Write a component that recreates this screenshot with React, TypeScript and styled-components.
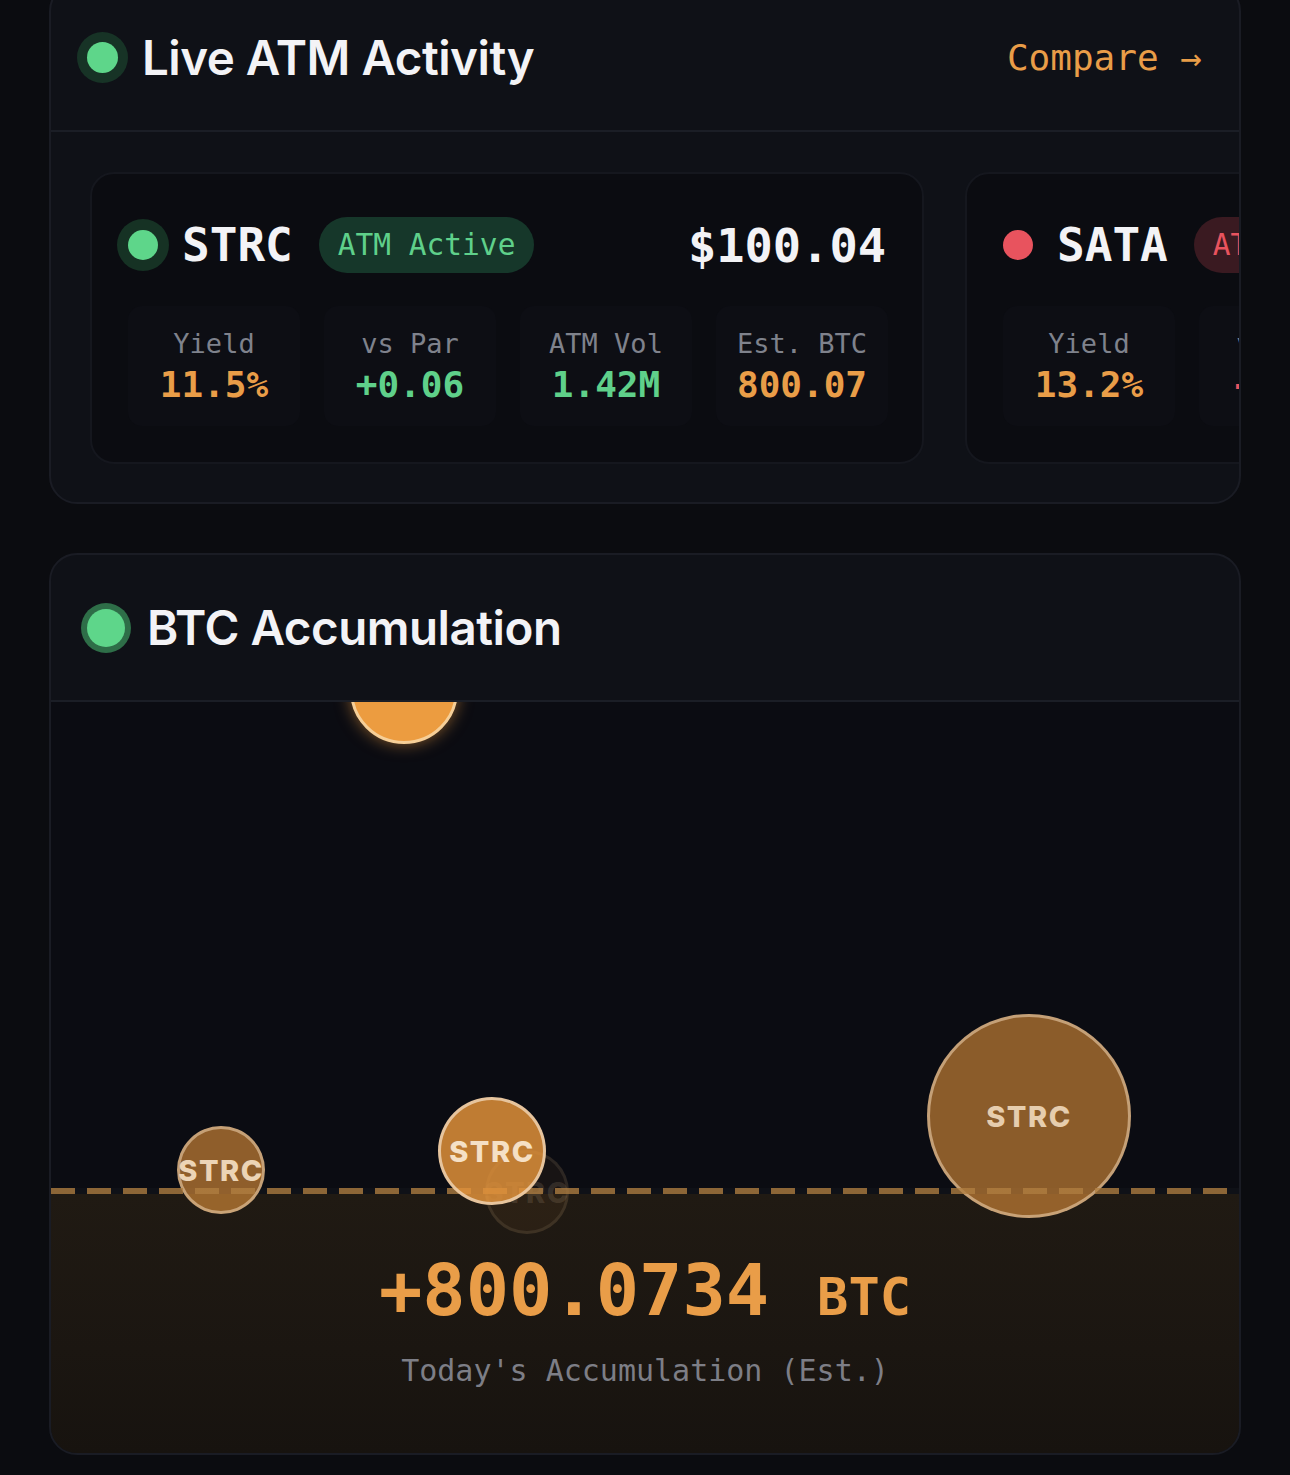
import React from "react";
import styled, { createGlobalStyle } from "styled-components";

const Global = createGlobalStyle`
  html, body { margin: 0; padding: 0; background: #0b0c10; }
  body { font-family: "Inter", "Liberation Sans", sans-serif; overflow: hidden; }
  * { box-sizing: border-box; }
`;

const MONO = `"DejaVu Sans Mono", "Liberation Mono", monospace`;
const ORANGE = "#e99d48";
const GREEN = "#5fd08a";
const RED = "#e8535e";

const Page = styled.div`
  width: 1290px;
  height: 1475px;
  padding: 0 49px;
  display: flex;
  flex-direction: column;
  gap: 49px;
  background: #0b0c10;
`;

const Panel = styled.section<{ $first?: boolean }>`
  width: 1192px;
  margin-top: ${(p) => (p.$first ? "-17px" : "0")};
  background: #0f1117;
  border: 2px solid #1a1c24;
  border-radius: 28px;
  overflow: hidden;
  display: flex;
  flex-direction: column;
`;

const PanelHeader = styled.header`
  height: 147px;
  flex-shrink: 0;
  display: flex;
  align-items: center;
  justify-content: space-between;
  padding: 0 37px 0 36px;
  border-bottom: 2px solid #1b1e26;
`;

const TitleGroup = styled.div<{ $gap: number }>`
  display: flex;
  align-items: center;
  gap: ${(p) => p.$gap}px;
`;

const Dot = styled.span<{ $color: string; $ring: string; $ringSize: number; $size: number }>`
  width: ${(p) => p.$size}px;
  height: ${(p) => p.$size}px;
  border-radius: 50%;
  background: ${(p) => p.$color};
  box-shadow: 0 0 0 ${(p) => p.$ringSize}px ${(p) => p.$ring};
  flex-shrink: 0;
`;

const Title = styled.h2`
  margin: 0;
  color: #f3f3f6;
  font-family: "Inter", "Liberation Sans", sans-serif;
  font-weight: 600;
  font-size: 47.5px;
  letter-spacing: -0.5px;
  line-height: 1;
`;

const CompareLink = styled.a`
  font-family: ${MONO};
  font-size: 36px;
  color: ${ORANGE};
  text-decoration: none;
`;

const Track = styled.div`
  display: flex;
  gap: 41px;
  padding: 40px 0 38px 39px;
`;

const TickerCard = styled.article`
  width: 834px;
  height: 292px;
  flex-shrink: 0;
  background: #0b0c11;
  border: 2px solid #15171e;
  border-radius: 24px;
  padding: 43px 36px 0 36px;
  display: flex;
  flex-direction: column;
  gap: 33px;
`;

const CardHead = styled.div`
  height: 56px;
  display: flex;
  align-items: center;
`;

const Ticker = styled.span`
  font-family: ${MONO};
  font-weight: 700;
  font-size: 46px;
  color: #f3f3f6;
  margin-left: 24px;
  line-height: 1;
`;

const Badge = styled.span<{ $tone: "green" | "red" }>`
  margin-left: 26px;
  height: 56px;
  padding: 0 19px;
  border-radius: 28px;
  display: inline-flex;
  align-items: center;
  font-family: ${MONO};
  font-size: 29.5px;
  white-space: nowrap;
  background: ${(p) => (p.$tone === "green" ? "#16372a" : "#3a1a21")};
  color: ${(p) => (p.$tone === "green" ? GREEN : RED)};
`;

const Price = styled.span`
  margin-left: auto;
  font-family: ${MONO};
  font-weight: 700;
  font-size: 47px;
  color: #f3f3f6;
  line-height: 1;
`;

const Stats = styled.div`
  display: grid;
  grid-template-columns: repeat(4, 172px);
  gap: 24px;
`;

const StatBox = styled.div`
  height: 120px;
  border-radius: 14px;
  background: #0d0e14;
  display: flex;
  flex-direction: column;
  align-items: center;
  justify-content: center;
  gap: 10px;
  font-family: ${MONO};
`;

const StatLabel = styled.span`
  font-size: 27px;
  color: #7f828c;
  line-height: 1;
`;

const StatValue = styled.span<{ $color: string }>`
  font-size: 36px;
  font-weight: 700;
  color: ${(p) => p.$color};
  line-height: 1;
`;

const Chart = styled.div`
  position: relative;
  height: 751px;
  display: flex;
  flex-direction: column;
  overflow: hidden;
`;

const Sky = styled.div`
  height: 486px;
  flex-shrink: 0;
  background: #0b0c12;
`;

const DashLine = styled.div`
  position: relative;
  z-index: 2;
  height: 6px;
  flex-shrink: 0;
  margin-right: 12px;
  background: repeating-linear-gradient(
    90deg,
    rgba(176, 126, 64, 0.78) 0 24px,
    transparent 24px 36px
  );
`;

const Ground = styled.div`
  flex: 1;
  background: linear-gradient(180deg, #201a13 0%, #1b1611 60%, #17130f 100%);
  display: flex;
  flex-direction: column;
  align-items: center;
  padding-top: 60px;
  font-family: ${MONO};
`;

const Total = styled.div`
  display: flex;
  align-items: baseline;
  gap: 48px;
  color: ${ORANGE};
  font-weight: 700;
  line-height: 1;
`;

const TotalNum = styled.span`
  font-size: 72px;
`;

const TotalUnit = styled.span`
  font-size: 52px;
`;

const Caption = styled.div`
  margin-top: 27px;
  font-size: 30px;
  color: #7d7e86;
`;

const Bubble = styled.div<{ $fill: string; $border: string; $text: string; $glow?: boolean; $z: number }>`
  position: absolute;
  z-index: ${(p) => p.$z};
  border-radius: 50%;
  background: ${(p) => p.$fill};
  border: 3px solid ${(p) => p.$border};
  box-shadow: ${(p) => (p.$glow ? "0 0 16px rgba(236,155,63,0.55)" : "none")};
  display: flex;
  align-items: center;
  justify-content: center;
  color: ${(p) => p.$text};
  font-family: "Inter", "Liberation Sans", sans-serif;
  font-weight: 800;
  font-size: 29px;
  letter-spacing: 1.5px;
  white-space: nowrap;
`;

type Stat = { label: string; value: string; color: string };

const strcStats: Stat[] = [
  { label: "Yield", value: "11.5%", color: ORANGE },
  { label: "vs Par", value: "+0.06", color: GREEN },
  { label: "ATM Vol", value: "1.42M", color: GREEN },
  { label: "Est. BTC", value: "800.07", color: ORANGE },
];

const sataStats: Stat[] = [
  { label: "Yield", value: "13.2%", color: ORANGE },
  { label: "vs Par", value: "-0.84", color: RED },
  { label: "ATM Vol", value: "0.00M", color: "#7f828c" },
  { label: "Est. BTC", value: "0.00", color: ORANGE },
];

type BubbleDef = {
  size: number;
  left: number;
  top: number;
  fill: string;
  border: string;
  text: string;
  label: string;
  glow?: boolean;
  z: number;
};

const bubbles: BubbleDef[] = [
  { size: 108, left: 299, top: -66, fill: "#ec9c40", border: "#f6cf98", text: "#f3dcc0", label: "", glow: true, z: 3 },
  { size: 88, left: 126, top: 424, fill: "rgba(232,150,60,0.6)", border: "rgba(235,205,170,0.6)", text: "#ecd4b6", label: "STRC", z: 1 },
  { size: 84, left: 434, top: 448, fill: "rgba(232,150,60,0.06)", border: "rgba(235,205,170,0.1)", text: "rgba(235,205,170,0.14)", label: "STRC", z: 1 },
  { size: 108, left: 387, top: 395, fill: "rgba(226,146,58,0.84)", border: "rgba(240,215,185,0.8)", text: "#f5e0c6", label: "STRC", z: 3 },
  { size: 204, left: 876, top: 312, fill: "rgba(232,150,60,0.58)", border: "rgba(235,205,170,0.6)", text: "#e6cdae", label: "STRC", z: 1 },
];

function TickerPanel(props: {
  name: string;
  dot: string;
  ring: string;
  badge: string;
  tone: "green" | "red";
  price: string;
  stats: Stat[];
}) {
  return (
    <TickerCard>
      <CardHead>
        <Dot $color={props.dot} $ring={props.ring} $ringSize={11} $size={30} />
        <Ticker>{props.name}</Ticker>
        <Badge $tone={props.tone}>{props.badge}</Badge>
        <Price>{props.price}</Price>
      </CardHead>
      <Stats>
        {props.stats.map((s) => (
          <StatBox key={s.label}>
            <StatLabel>{s.label}</StatLabel>
            <StatValue $color={s.color}>{s.value}</StatValue>
          </StatBox>
        ))}
      </Stats>
    </TickerCard>
  );
}

export default function App() {
  return (
    <>
      <Global />
      <Page>
        <Panel $first>
          <PanelHeader>
            <TitleGroup $gap={24}>
              <Dot $color="#5ed68a" $ring="#173326" $ringSize={10} $size={31} />
              <Title>Live ATM Activity</Title>
            </TitleGroup>
            <CompareLink href="#">Compare →</CompareLink>
          </PanelHeader>
          <Track>
            <TickerPanel
              name="STRC"
              dot="#5ed68a"
              ring="#163224"
              badge="ATM Active"
              tone="green"
              price="$100.04"
              stats={strcStats}
            />
            <TickerPanel
              name="SATA"
              dot={RED}
              ring="rgba(0,0,0,0)"
              badge="ATM Paused"
              tone="red"
              price="$98.16"
              stats={sataStats}
            />
          </Track>
        </Panel>

        <Panel>
          <PanelHeader>
            <TitleGroup $gap={22}>
              <Dot $color="#5ed68a" $ring="#2e6e48" $ringSize={6} $size={38} />
              <Title>BTC Accumulation</Title>
            </TitleGroup>
          </PanelHeader>
          <Chart>
            <Sky />
            <DashLine />
            <Ground>
              <Total>
                <TotalNum>+800.0734</TotalNum>
                <TotalUnit>BTC</TotalUnit>
              </Total>
              <Caption>Today's Accumulation (Est.)</Caption>
            </Ground>
            {bubbles.map((b, i) => (
              <Bubble
                key={i}
                $fill={b.fill}
                $border={b.border}
                $text={b.text}
                $glow={b.glow}
                $z={b.z}
                style={{ width: b.size, height: b.size, left: b.left, top: b.top }}
              >
                {b.label}
              </Bubble>
            ))}
          </Chart>
        </Panel>
      </Page>
    </>
  );
}
